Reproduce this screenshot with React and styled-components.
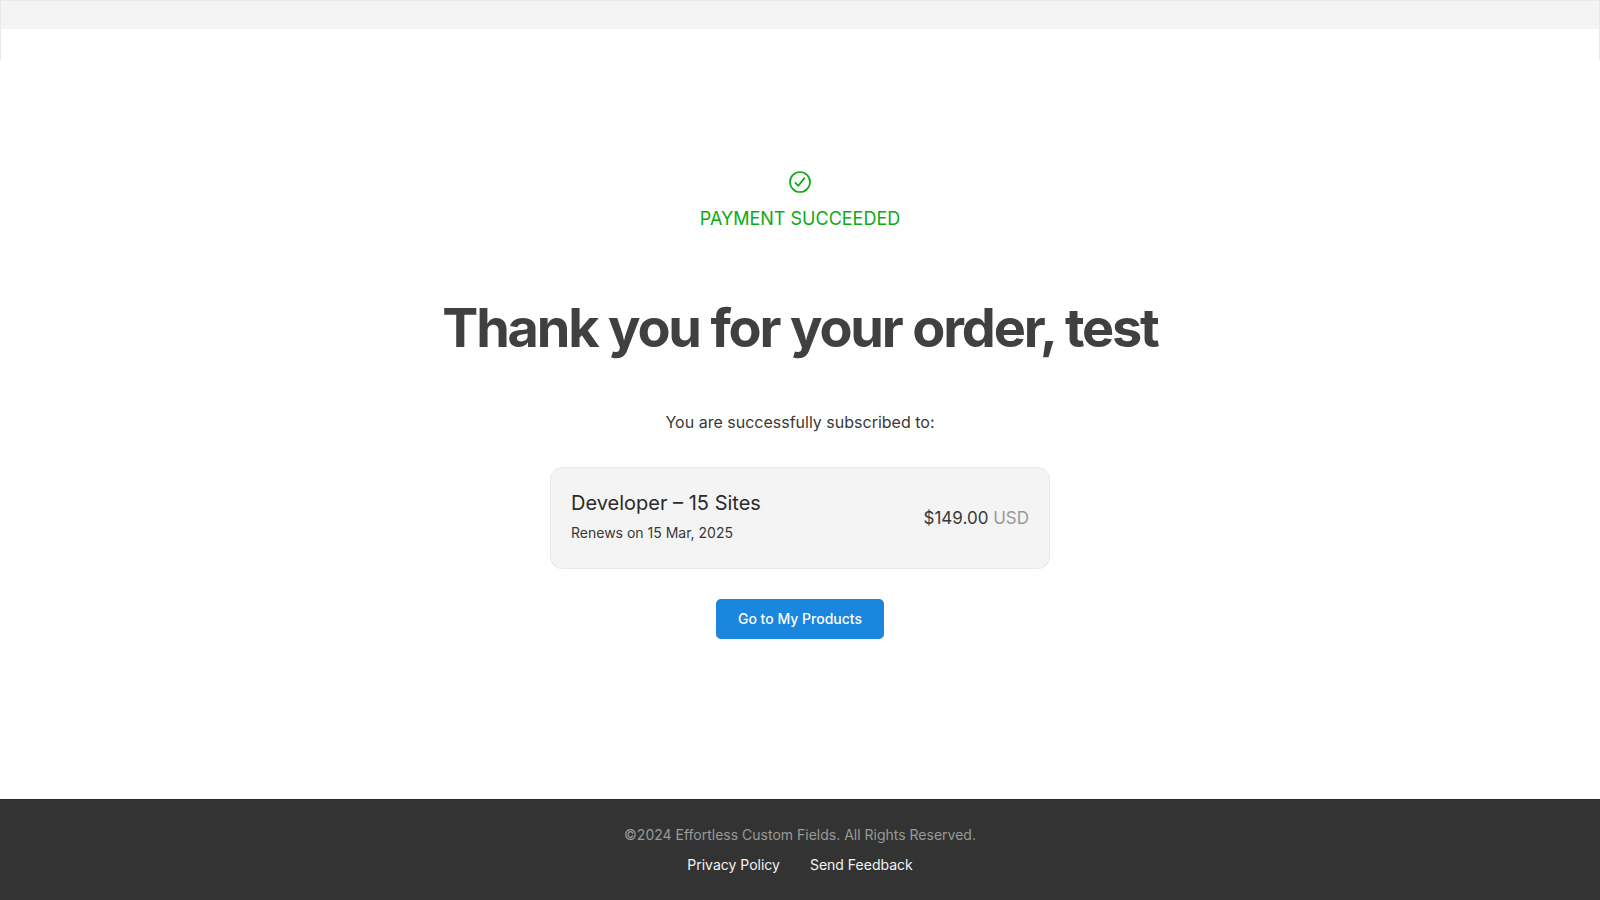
import React from "react";
import styled, { createGlobalStyle } from "styled-components";

const GlobalStyle = createGlobalStyle`
  *, *::before, *::after { box-sizing: border-box; }
  body { margin: 0; background: #fff; color: #383838; font-family: Inter, "Liberation Sans", sans-serif; }
`;

const Page = styled.div`
  min-height: 100vh;
  display: flex;
  flex-direction: column;
`;

const Header = styled.header`
  height: 60px;
  border: 1px solid #e9e9e9;
  border-bottom: 0;
`;

const HeaderStrip = styled.div`
  height: 28px;
  background: #f4f4f4;
`;

const Main = styled.main`
  flex: 1;
  display: flex;
  flex-direction: column;
  align-items: center;
  padding: 110px 24px 40px;
`;

const Status = styled.div`
  display: flex;
  flex-direction: column;
  align-items: center;
  gap: 12px;
  color: #0caa15;
  font-size: 18px;
  line-height: 26px;
`;

const Title = styled.h1`
  margin: 58px 0 0;
  color: #404040;
  font-size: 54px;
  line-height: 76px;
  font-weight: 700;
  letter-spacing: -0.04em;
  text-align: center;
`;

const Lead = styled.p`
  margin: 42px 0 0;
  font-size: 16px;
  line-height: 28px;
`;

const OrderCard = styled.section`
  width: 100%;
  max-width: 500px;
  margin-top: 31px;
  padding: 19px 20px;
  display: flex;
  align-items: center;
  justify-content: space-between;
  background: #f4f4f4;
  border: 1px solid #e8e8e8;
  border-radius: 12px;
`;

const Plan = styled.div`
  padding-bottom: 2px;
`;

const PlanName = styled.h2`
  margin: 0;
  color: #2a2a2a;
  font-size: 20px;
  line-height: 32px;
  font-weight: 400;
`;

const Renewal = styled.p`
  margin: 0;
  font-size: 14px;
  line-height: 28px;
`;

const Price = styled.p`
  margin: 0;
  font-size: 17px;
  line-height: 28px;
`;

const Currency = styled.span`
  color: #999;
`;

const PrimaryButton = styled.button`
  margin-top: 30px;
  height: 40px;
  padding: 0 22px;
  border: 0;
  border-radius: 5px;
  background: #1a86de;
  color: #fff;
  font: 500 14px/20px Inter, "Liberation Sans", sans-serif;
  cursor: pointer;
`;

const Footer = styled.footer`
  padding: 20px 24px;
  display: flex;
  flex-direction: column;
  align-items: center;
  background: #333;
  border-top: 1px solid #292929;
  font-size: 14px;
  line-height: 30px;
`;

const Copyright = styled.p`
  margin: 0;
  color: #999;
`;

const FooterNav = styled.nav`
  display: flex;
  gap: 30px;
`;

const FooterLink = styled.a`
  color: #f4f4f4;
  text-decoration: none;
`;

function CheckCircle() {
  return (
    <svg width="24" height="24" viewBox="0 0 24 24" fill="none" stroke="currentColor" strokeWidth="1.7" aria-hidden="true">
      <circle cx="12" cy="12" r="10" />
      <path d="M6.9 12.3 10.3 15.7 16.8 7.6" />
    </svg>
  );
}

export default function App() {
  return (
    <Page>
      <GlobalStyle />
      <Header>
        <HeaderStrip />
      </Header>
      <Main>
        <Status role="status">
          <CheckCircle />
          <span>PAYMENT SUCCEEDED</span>
        </Status>
        <Title>Thank you for your order, test</Title>
        <Lead>You are successfully subscribed to:</Lead>
        <OrderCard>
          <Plan>
            <PlanName>Developer – 15 Sites</PlanName>
            <Renewal>Renews on 15 Mar, 2025</Renewal>
          </Plan>
          <Price>
            $149.00 <Currency>USD</Currency>
          </Price>
        </OrderCard>
        <PrimaryButton type="button">Go to My Products</PrimaryButton>
      </Main>
      <Footer>
        <Copyright>©2024 Effortless Custom Fields. All Rights Reserved.</Copyright>
        <FooterNav>
          <FooterLink href="#privacy">Privacy Policy</FooterLink>
          <FooterLink href="#feedback">Send Feedback</FooterLink>
        </FooterNav>
      </Footer>
    </Page>
  );
}
